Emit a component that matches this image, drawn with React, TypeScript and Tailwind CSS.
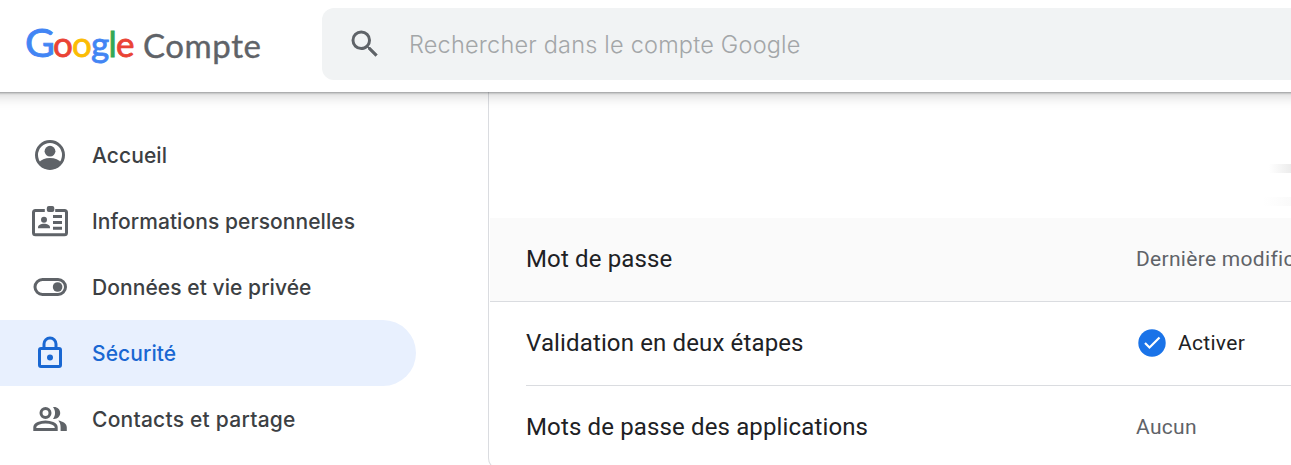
import type { ReactNode } from "react";

const geo = "font-['Lato','Liberation_Sans',sans-serif]";
const roboto = "font-['Roboto','Liberation_Sans',sans-serif]";

function AccountIcon() {
  return (
    <svg width="36" height="36" viewBox="0 0 36 36" fill="none">
      <circle cx="18" cy="18" r="13.5" stroke="#5f6368" strokeWidth="3" />
      <circle cx="18" cy="14.2" r="5.4" fill="#5f6368" />
      <path d="M6.500 26c2.500-3.300 6.500-5 11.500-5s9 1.700 11.500 5c-2.500 4-6.500 6.300-11.500 6.300S9 30 6.500 26z" fill="#5f6368" />
    </svg>
  );
}

function BadgeIcon() {
  return (
    <svg width="36" height="36" viewBox="0 0 36 36" fill="none">
      <path d="M12.800 7.500H3.500a2 2 0 0 0-2 2v20.200a2 2 0 0 0 2 2h29a2 2 0 0 0 2-2V9.500a2 2 0 0 0-2-2h-9.300" stroke="#5f6368" strokeWidth="3" />
      <rect x="14.800" y="3" width="7.500" height="6" rx="2" fill="#5f6368" />
      <circle cx="12" cy="16.700" r="3" fill="#5f6368" />
      <path d="M6 25.300v-1c0-2.300 3-3.600 6-3.600s6 1.300 6 3.600v1z" fill="#5f6368" />
      <path d="M21 13.500h9M21 19.500h9M21 25.300h9" stroke="#5f6368" strokeWidth="3" />
    </svg>
  );
}

function ToggleIcon() {
  return (
    <svg width="36" height="36" viewBox="0 0 36 36" fill="none">
      <rect x="3" y="10.500" width="30.500" height="15" rx="7.500" stroke="#5f6368" strokeWidth="3" />
      <circle cx="25.600" cy="18" r="4.800" fill="#5f6368" />
    </svg>
  );
}

function LockIcon() {
  return (
    <svg width="36" height="36" viewBox="0 0 36 36" fill="none" stroke="#1967d2" strokeWidth="3">
      <rect x="7.500" y="13.500" width="21" height="18" rx="1.500" />
      <path d="M12 13.500V9a6 6 0 0 1 12 0v4.500" />
      <circle cx="18" cy="22.500" r="3" fill="#1967d2" stroke="none" />
    </svg>
  );
}

function PeopleIcon() {
  return (
    <svg width="36" height="36" viewBox="0 0 36 36" fill="none">
      <circle cx="13.500" cy="12" r="4.500" stroke="#5f6368" strokeWidth="3" />
      <path d="M2.800 28.500v-2.200c0-3.300 5.700-5.300 10.700-5.300s10.700 2 10.700 5.300v2.200z" stroke="#5f6368" strokeWidth="3" />
      <path d="M21 6.100c4-.6 7.200 2.200 7.200 5.900s-3.200 6.500-7.200 5.900c2.800-3.700 2.800-8.100 0-11.800zM26.300 19.600c4.500.8 8.500 3.200 8.500 6.800V30h-6.200v-3.600c0-2.700-.7-4.900-2.300-6.800z" fill="#5f6368" />
    </svg>
  );
}

function NavItem({ icon, active, children }: { icon: ReactNode; active?: boolean; children: ReactNode }) {
  return (
    <a
      className={
        active
          ? "flex h-[66px] w-[416px] items-center gap-6 rounded-r-full bg-[#e8f0fe] pl-8 text-[#1967d2]"
          : "flex h-[66px] w-[416px] items-center gap-6 pl-8 text-[#3c4043]"
      }
    >
      {icon}
      {children}
    </a>
  );
}

const label = "whitespace-nowrap font-['Inter','Liberation_Sans',sans-serif] text-[21px] leading-[29px] font-medium tracking-[0.07px]";
const title = "w-[610px] shrink-0 pb-0.5 text-[24px] tracking-[0.14px] text-[#202124]";

export default function App() {
  return (
    <div className="flex h-[465px] w-full flex-col overflow-hidden bg-white">
      <header className="relative z-10 -mx-5 flex h-[92px] shrink-0 bg-white pl-5 shadow-[0_1px_2px_rgba(60,64,67,0.45),0_3px_14px_rgba(0,0,0,0.2)]">
        <div className={`${geo} flex w-[322px] shrink-0 items-start pl-[25px] whitespace-nowrap`}>
          <span className="flex w-[118px] items-baseline pt-[18px] text-[35px] leading-[48px] tracking-[-0.8px] [-webkit-text-stroke:0.8px_currentColor]">
            <span className="w-[28px] origin-left scale-x-108 text-[38px] tracking-normal text-[#4285f4]">G</span>
            <span className="text-[#ea4335]">o</span>
            <span className="text-[#fbbc04]">o</span>
            <span className="text-[#4285f4]">g</span>
            <span className="text-[#34a853]">l</span>
            <span className="text-[#ea4335]">e</span>
          </span>
          <span className="pt-[21px] text-[33px] leading-[48px] tracking-[0.6px] text-[#5f6368] [-webkit-text-stroke:0.4px_currentColor]">Compte</span>
        </div>
        <div className="mt-2 flex h-[72px] flex-1 items-center overflow-hidden rounded-l-[12px] bg-[#f1f3f4] pl-[25px]">
          <svg width="36" height="36" viewBox="0 0 24 24" fill="#5f6368">
            <path d="M15.500 14h-.79l-.28-.27A6.470 6.470 0 0 0 16 9.500 6.500 6.500 0 1 0 9.500 16c1.610 0 3.090-.59 4.230-1.570l.27.28v.79l5 4.990L20.490 19l-4.990-5zm-6 0C7.010 14 5 11.990 5 9.500S7.010 5 9.500 5 14 7.010 14 9.500 11.990 14 9.500 14z" />
          </svg>
          <span className="ml-[26px] pt-px font-['Inter','Liberation_Sans',sans-serif] text-[23.500px] leading-8 font-light tracking-[0.2px] whitespace-nowrap text-[#a3a6a8]">Rechercher dans le compte Google</span>
        </div>
      </header>
      <div className="flex min-h-0 flex-1">
        <nav className="w-[488px] shrink-0 pt-[30px]">
          <NavItem icon={<AccountIcon />}><span className={label}>Accueil</span></NavItem>
          <NavItem icon={<BadgeIcon />}><span className={label}>Informations personnelles</span></NavItem>
          <NavItem icon={<ToggleIcon />}><span className={label}>Données et vie privée</span></NavItem>
          <NavItem icon={<LockIcon />} active><span className={label}>Sécurité</span></NavItem>
          <NavItem icon={<PeopleIcon />}><span className={`${label} tracking-[0.24px]`}>Contacts et partage</span></NavItem>
        </nav>
        <main className={`${roboto} h-[378px] min-w-0 flex-1 overflow-hidden rounded-bl-[12px] border-b border-l border-[#dadce0]`}>
          <div className="flex h-[126px] flex-col items-end pt-[72px]">
            <div className="h-[9px] w-[22px] bg-linear-to-r from-white to-[#ececec]" />
            <div className="mt-6 h-[9px] w-[28px] bg-linear-to-r from-white to-[#fafafa]" />
          </div>
          <div className="ml-px flex h-[84px] items-center border-b border-[#dadce0] bg-[#fafafa] pl-9">
            <span className={title}>Mot de passe</span>
            <span className="text-[21px] tracking-[0.3px] whitespace-nowrap text-[#5f6368]">Dernière modification</span>
          </div>
          <div className="ml-[37px] flex h-[84px] items-center border-b border-[#dadce0]">
            <span className={title}>Validation en deux étapes</span>
            <svg className="-mt-px ml-px" width="30" height="30" viewBox="0 0 30 30" fill="none">
              <circle cx="15" cy="15" r="13.700" fill="#1a73e8" />
              <path d="M8 15l4.500 4.500 10-10" stroke="white" strokeWidth="2.200" />
            </svg>
            <span className="ml-[11px] text-[21px] tracking-[0.3px] text-[#202124]">Activer</span>
          </div>
          <div className="ml-[37px] flex h-[84px] items-center">
            <span className={title}>Mots de passe des applications</span>
            <span className="text-[21px] tracking-[0.3px] text-[#5f6368]">Aucun</span>
          </div>
        </main>
      </div>
    </div>
  );
}
